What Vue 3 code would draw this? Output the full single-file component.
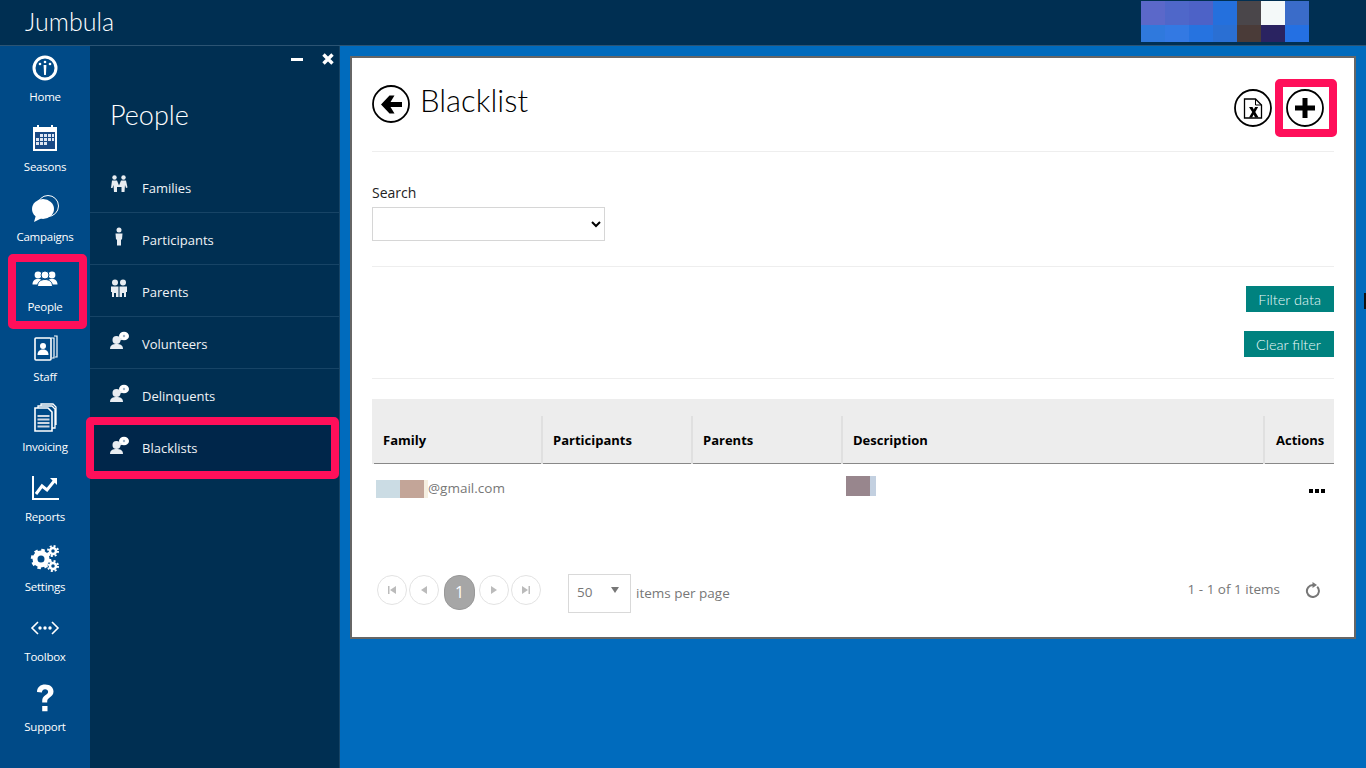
<script setup>
const bubble = '<circle cx="6.500" cy="9" r="4"/><path d="M0 18c0-4 3-5 6.500-5s6.500 1 6.500 5z"/><ellipse cx="14" cy="5" rx="5" ry="4.300" fill="#fff"/><path d="M10 8l1-1 2 1.500-3 1z"/><circle cx="14" cy="5" r="1.200" fill="#9fb4c6"/>'

const rail = [
  { label: 'Home', icon: '<circle cx="16" cy="16" r="11" fill="none" stroke="#fff" stroke-width="3"/><circle cx="11" cy="12" r="1.300"/><circle cx="16" cy="10" r="1.300"/><circle cx="21" cy="12" r="1.300"/><path d="M14.600 13h2.800l-.5 10h-1.800z"/>' },
  { label: 'Seasons', icon: '<path d="M4 5h4V3h2v2h12V3h2v2h4v24H4z"/><rect x="6" y="10" width="20" height="17" fill="#1a4a85"/><path fill="#dfe6f2" d="M11 12h3v3h-3zM15 12h3v3h-3zM19 12h3v3h-3zM23 12h2v3h-2zM7 16h3v3H7zM11 16h3v3h-3zM15 16h3v3h-3zM19 16h3v3h-3zM23 16h2v3h-2zM7 20h3v3H7zM11 20h3v3h-3zM15 20h3v3h-3z"/>' },
  { label: 'Campaigns', icon: '<circle cx="19" cy="14" r="10.500" fill="none" stroke="#fff" stroke-width="1"/><ellipse cx="14" cy="17" rx="11" ry="10"/><path d="M7 23l-2 7 8-4z"/>' },
  { label: 'People', icon: '<circle cx="9" cy="13" r="3.400"/><circle cx="23" cy="13" r="3.400"/><path d="M3.500 22.500c0-3.500 2-5.500 5.500-5.500s5.500 2 5.500 5.500zM17.500 22.500c0-3.500 2-5.500 5.500-5.500s5.500 2 5.500 5.500z"/><circle cx="16" cy="13" r="4" stroke="#004a87"/><path d="M8.500 24.500c0-4.500 3-7 7.500-7s7.500 2.500 7.500 7z" stroke="#004a87"/>' },
  { label: 'Staff', icon: '<g fill="none" stroke="#fff" stroke-width="1.200"><path d="M22 6h3v20h-2M25 4h3v21h-2"/><rect x="6" y="6" width="16" height="22" rx="1" stroke-width="1.600"/></g><circle cx="14" cy="14" r="3"/><path d="M8.500 23c0-4 2.500-5.500 5.500-5.500s5.500 1.500 5.500 5.500z"/>' },
  { label: 'Invoicing', icon: '<g fill="none" stroke="#fff" stroke-width="1.300"><path d="M9 6V4h14l3 3v19h-3M12 4V2h12l3 3v18"/><path d="M6 6h13l4 4v19H6z" stroke-width="1.600"/></g><path fill="#cfd8e3" d="M8.500 13h12v2h-12zM8.500 16.500h12v2h-12zM8.500 20h12v2h-12zM8.500 23.500h12v2h-12z"/>' },
  { label: 'Reports', icon: '<path d="M3 4h2v22h25v2H3z"/><path d="M7 22l6-8 5 4 8-10" fill="none" stroke="#fff" stroke-width="3"/><path d="M21 6h7v7z"/>' },
  { label: 'Settings', icon: '<g fill="none" stroke="#fff"><circle cx="12" cy="17" r="6" stroke-width="5"/><circle cx="12" cy="17" r="9" stroke-width="2.500" stroke-dasharray="3.500 3.570"/><circle cx="24" cy="9" r="3" stroke-width="2.500"/><circle cx="24" cy="9" r="5" stroke-width="2" stroke-dasharray="2 1.930"/><circle cx="24" cy="24" r="3" stroke-width="2.500"/><circle cx="24" cy="24" r="5" stroke-width="2" stroke-dasharray="2 1.930"/></g>' },
  { label: 'Toolbox', icon: '<path d="M9 10l-6 6 6 6M23 10l6 6-6 6" fill="none" stroke="#fff" stroke-width="1.600"/><circle cx="11" cy="16" r="1.700"/><circle cx="16" cy="16" r="1.700"/><circle cx="21" cy="16" r="1.700"/>' },
  { label: 'Support', icon: '<path d="M8 10c0-5 3.500-7.500 8.200-7.500 5 0 8.300 2.800 8.300 7 0 3-1.600 4.500-3.800 6-1.800 1.300-2.500 2-2.500 4v1h-5v-1.500c0-3 1.100-4.500 3.400-6 1.700-1.200 2.500-1.900 2.500-3.300 0-1.500-1.200-2.500-3-2.500-2 0-3.200 1.300-3.200 3.300zM13.200 24h5.300v5.300h-5.300z"/>' }
]

const menu = [
  { label: 'Families', icon: '<circle cx="4.500" cy="2.500" r="2.200"/><circle cx="13.500" cy="2.500" r="2.200"/><path d="M2 5.500h5l2 5 2-5h5l1.500 7-1.500.5-1-3-.5 7h-3v-5H7v5H4l-.5-7-1 3L1 13z"/>' },
  { label: 'Participants', icon: '<circle cx="9" cy="3" r="2.500"/><path d="M5.500 6.500h7l-.5 6h-1v6H7v-6H6z"/>' },
  { label: 'Parents', icon: '<circle cx="5" cy="3.500" r="3"/><circle cx="13" cy="3.500" r="3"/><path d="M1 7.500h7.500V18H6v-4H4v4H2v-5H1zM9.500 7.500H17V13h-1v5h-2v-4h-2v4H9.500z"/>' },
  { label: 'Volunteers', icon: bubble },
  { label: 'Delinquents', icon: bubble },
  { label: 'Blacklists', icon: bubble, active: true }
]

const blurTop = ['#5b68c9', '#4f67c9', '#4d62c7', '#2470dd', '#4a464a', '#f4f9f9', '#3a6cc9']
const blurBottom = ['#2f79dd', '#3379e3', '#2673e0', '#2a6fd3', '#4a3b38', '#2a2361', '#2470e3']

const columns = ['Family', 'Participants', 'Parents', 'Description', 'Actions']
</script>

<template>
  <div class="app">
    <header class="topbar">
      <span class="brand">Jumbula</span>
      <div class="avatar">
        <span v-for="(c, i) in blurTop" :key="'t' + i" :style="{ background: c }"></span>
        <span v-for="(c, i) in blurBottom" :key="'b' + i" :style="{ background: c }"></span>
      </div>
    </header>

    <div class="body">
      <nav class="rail">
        <a v-for="item in rail" :key="item.label" class="rail-item" :class="{ marked: item.label === 'People' }">
          <svg viewBox="0 0 32 32" width="32" height="32" fill="#fff" v-html="item.icon"></svg>
          <span>{{ item.label }}</span>
        </a>
      </nav>

      <aside class="panel">
        <div class="panel-tools">
          <span class="minus"></span>
          <svg viewBox="0 0 12 12" width="12" height="12"><path d="M1.500 1.500l9 9M10.500 1.500l-9 9" stroke="#fff" stroke-width="3.400"/></svg>
        </div>
        <h2>People</h2>
        <ul>
          <li v-for="m in menu" :key="m.label" :class="{ active: m.active }">
            <svg viewBox="0 0 20 20" width="20" height="20" fill="#e8edf2" v-html="m.icon"></svg>
            <span>{{ m.label }}</span>
          </li>
        </ul>
      </aside>

      <main class="main">
        <section class="card">
          <div class="page-head">
            <div class="title">
              <svg viewBox="0 0 38 38" width="38" height="38">
                <circle cx="19" cy="19" r="18" fill="none" stroke="#000" stroke-width="1.800"/>
                <path d="M30 17H18.500l4-6.500h-5L9 19.500l8.500 9h5l-4-6.500H30z"/>
              </svg>
              <h1>Blacklist</h1>
            </div>
            <div class="head-actions">
              <svg viewBox="0 0 38 38" width="38" height="38">
                <circle cx="19" cy="19" r="18" fill="#fff" stroke="#000" stroke-width="1.800"/>
                <path d="M10.500 10h11l6 6v13h-17z" fill="none" stroke="#000" stroke-width="1.300"/>
                <path d="M21.500 10v6h6" fill="none" stroke="#000" stroke-width="1"/>
                <path d="M15 18h3.500l1.300 2.500 1.300-2.500h3L21.300 23l3.300 5.500h-3.500l-1.500-3-1.500 3h-3.100l3.200-5.500z"/>
              </svg>
              <div class="plus-wrap">
                <svg viewBox="0 0 38 38" width="38" height="38">
                  <circle cx="19" cy="19" r="18" fill="#fff" stroke="#000" stroke-width="1.800"/>
                  <path d="M16.500 9h5v7.500H29v5h-7.500V29h-5v-7.500H9v-5h7.500z"/>
                </svg>
              </div>
            </div>
          </div>

          <div class="search">
            <label for="search">Search</label>
            <select id="search"><option></option></select>
          </div>

          <div class="filters">
            <button>Filter data</button>
            <button>Clear filter</button>
          </div>

          <div class="grid">
            <div class="grid-top"></div>
            <table>
              <thead>
                <tr>
                  <th v-for="c in columns" :key="c">{{ c }}</th>
                </tr>
              </thead>
              <tbody>
                <tr>
                  <td class="cell-email">
                    <i class="blk" style="background:#cbdce4"></i><i class="blk" style="background:#c3a598"></i><i class="blk-thin"></i>@gmail.com
                  </td>
                  <td></td>
                  <td></td>
                  <td class="cell-desc">
                    <i class="blk" style="background:#98868d"></i><i class="blk-end"></i>
                  </td>
                  <td class="cell-dots"><b></b><b></b><b></b></td>
                </tr>
              </tbody>
            </table>
          </div>

          <div class="pager">
            <div class="pages">
              <span class="pg">
                <svg viewBox="0 0 10 10" width="10" height="10"><path d="M1 1h1.500v8H1zM9 1v8L3 5z"/></svg>
              </span>
              <span class="pg">
                <svg viewBox="0 0 10 10" width="10" height="10"><path d="M8 1v8L2 5z"/></svg>
              </span>
              <span class="pg current">1</span>
              <span class="pg">
                <svg viewBox="0 0 10 10" width="10" height="10"><path d="M2 1v8l6-4z"/></svg>
              </span>
              <span class="pg">
                <svg viewBox="0 0 10 10" width="10" height="10"><path d="M1 1v8l6-4zM7.500 1H9v8H7.500z"/></svg>
              </span>
            </div>
            <div class="per-page">
              <span class="num">50</span>
              <span class="caret"></span>
            </div>
            <span class="per-label">items per page</span>
            <span class="count">1 - 1 of 1 items</span>
            <svg class="refresh" viewBox="0 0 16 16" width="16" height="16">
              <path d="M8 3A6 6 0 1 0 12.200 4.800" fill="none" stroke="#777" stroke-width="2"/>
              <path d="M7.500 0L12 3 7.500 6z" fill="#777"/>
            </svg>
          </div>
        </section>
      </main>
    </div>
    <span class="cursor-edge"></span>
  </div>
</template>

<style scoped>
.app {
  position: relative;
  width: 1366px;
  height: 768px;
  overflow: hidden;
  display: flex;
  flex-direction: column;
  font-family: "Open Sans", "Liberation Sans", sans-serif;
  background: #006bbd;
}
.topbar {
  height: 45px;
  flex: none;
  background: #002f52;
  border-bottom: 1px solid #2c5473;
  display: flex;
  justify-content: space-between;
  align-items: flex-start;
}
.brand {
  margin: 7px 0 0 25px;
  color: #fff;
  font-family: Lato, sans-serif;
  font-size: 25px;
  font-weight: 300;
  line-height: 28px;
}
.avatar {
  margin: 1px 57px 0 0;
  display: grid;
  grid-template-columns: repeat(7, 24px);
  grid-template-rows: 24px 17px;
}
.body {
  flex: 1;
  display: flex;
  min-height: 0;
}
.rail {
  width: 90px;
  flex: none;
  background: #004a87;
}
.rail-item {
  position: relative;
  height: 70px;
  display: flex;
  flex-direction: column;
  align-items: center;
  padding-top: 6px;
  box-sizing: border-box;
  color: #fff;
  font-size: 11.500px;
  letter-spacing: -0.25px;
  line-height: 16px;
}
.rail-item span {
  margin-top: 5px;
}
.rail-item.marked::after {
  content: "";
  position: absolute;
  left: 8px;
  top: -2px;
  width: 79px;
  height: 75px;
  box-sizing: border-box;
  border: 8px solid #ff0f5a;
  border-radius: 5px;
}
.panel {
  position: relative;
  width: 250px;
  flex: none;
  background: #002f52;
  border-right: 1px solid #174466;
  box-sizing: border-box;
}
.panel-tools {
  display: flex;
  justify-content: flex-end;
  align-items: center;
  gap: 19px;
  height: 14px;
  padding: 6px 5px 0 0;
}
.minus {
  width: 12px;
  height: 3px;
  background: #fff;
}
.panel h2 {
  margin: 33px 0 0 20px;
  color: #fff;
  font-family: Lato, sans-serif;
  font-size: 27px;
  font-weight: 300;
  line-height: 32px;
}
.panel ul {
  list-style: none;
  margin: 30px 0 0;
  padding: 0;
}
.panel li {
  position: relative;
  height: 52px;
  box-sizing: border-box;
  display: flex;
  align-items: center;
  padding: 2px 0 0 20px;
  border-bottom: 1px solid #174466;
  color: #f0f3f6;
  font-size: 13px;
}
.panel li svg {
  margin: -5px 12px 0 0;
}
.panel li:nth-last-child(2) {
  border-bottom: none;
}
.panel li.active {
  border-bottom: none;
  background: #00264a;
}
.panel li.active::after {
  content: "";
  position: absolute;
  left: -4px;
  right: 0;
  top: -4px;
  bottom: -6px;
  border: 8px solid #ff0f5a;
  border-radius: 5px;
}
.main {
  flex: 1;
  padding: 10px 10px 0;
  min-width: 0;
}
.card {
  height: 583px;
  box-sizing: border-box;
  background: #fff;
  border: 2px solid #666;
  padding: 0 20px;
}
.page-head {
  height: 94px;
  box-sizing: border-box;
  padding-top: 27px;
  border-bottom: 1px solid #eee;
  display: flex;
  justify-content: space-between;
  align-items: flex-start;
}
.title {
  display: flex;
  align-items: flex-start;
  gap: 10px;
}
.title h1 {
  margin: -2px 0 0;
  font-family: Lato, sans-serif;
  font-size: 31px;
  font-weight: 300;
  line-height: 34px;
  color: #000;
}
.head-actions {
  display: flex;
  gap: 14px;
  padding: 4px 10px 0 0;
}
.plus-wrap {
  position: relative;
  width: 38px;
  height: 38px;
}
.plus-wrap::after {
  content: "";
  position: absolute;
  left: -11px;
  top: -10px;
  width: 62px;
  height: 58px;
  box-sizing: border-box;
  border: 8px solid #ff0f5a;
  border-radius: 5px;
}
.search {
  height: 115px;
  box-sizing: border-box;
  padding-top: 31px;
  border-bottom: 1px solid #eee;
}
.search label {
  display: block;
  font-size: 14px;
  line-height: 20px;
  color: #222;
}
.search select {
  display: block;
  width: 233px;
  height: 34px;
  margin-top: 4px;
  padding-right: 2px;
  background: #fff;
  border: 1px solid #d6d6d6;
  border-radius: 0;
}
.filters {
  height: 112px;
  box-sizing: border-box;
  padding-top: 19px;
  border-bottom: 1px solid #eee;
  display: flex;
  flex-direction: column;
  align-items: flex-end;
  gap: 19px;
}
.filters button {
  height: 26px;
  padding: 0 13px 0 12px;
  border: none;
  background: #00827f;
  color: #eafafa;
  font-family: Lato, sans-serif;
  font-size: 14.500px;
  font-weight: 300;
}
.grid {
  margin-top: 20px;
}
.grid-top {
  height: 17px;
  background: #ededed;
}
table {
  width: 100%;
  table-layout: fixed;
  border-collapse: collapse;
}
th {
  height: 47px;
  padding: 2px 0 0 10px;
  box-sizing: border-box;
  background: #ededed;
  border-left: 2px solid #e0e0e0;
  border-bottom: 1px solid #888;
  text-align: left;
  font-size: 13px;
  font-weight: 700;
  color: #000;
}
th:nth-child(1) { width: 169px; padding-left: 9px; border-left-color: #ededed; }
th:nth-child(2), th:nth-child(3) { width: 150px; }
th:nth-child(5) { width: 70px; padding-left: 11px; }
td {
  height: 49px;
  padding: 0;
  font-size: 13.500px;
  color: #777;
}
.blk {
  display: inline-block;
  width: 24px;
  height: 18px;
  vertical-align: -5px;
}
.blk-thin {
  display: inline-block;
  width: 4px;
  height: 18px;
  background: #f5eee0;
  vertical-align: -5px;
}
.blk-end {
  display: inline-block;
  width: 6px;
  height: 20px;
  background: #c3d0e0;
}
.cell-email {
  padding-left: 3px;
}
.cell-desc {
  padding-left: 4px;
}
.cell-desc .blk {
  height: 20px;
  vertical-align: top;
}
.cell-dots {
  text-align: right;
  padding-right: 9px;
  white-space: nowrap;
}
.cell-dots b {
  display: inline-block;
  width: 4px;
  height: 4px;
  margin-left: 2px;
  background: #000;
}
.pager {
  margin-top: 61px;
  display: flex;
  align-items: flex-start;
  color: #777;
  font-size: 13.500px;
}
.pages {
  display: flex;
  align-items: flex-start;
  gap: 2px;
  margin: 1px 0 0 5px;
}
.pg {
  width: 28px;
  height: 28px;
  border: 1px solid #e3e3e3;
  border-radius: 50%;
  display: flex;
  align-items: center;
  justify-content: center;
}
.pg svg {
  fill: #bbb;
}
.pg.current {
  width: 29px;
  height: 33px;
  margin: 0 2px 0 3px;
  border-color: #999;
  border-radius: 15px;
  background: #a6a6a6;
  color: #fff;
  font-size: 16px;
}
.per-page {
  position: relative;
  width: 63px;
  height: 39px;
  margin-left: 27px;
  box-sizing: border-box;
  border: 1px solid #d9d9d9;
  padding: 7px 0 0 8px;
  line-height: 20px;
}
.caret {
  position: absolute;
  right: 11px;
  top: 12px;
  border-left: 4px solid transparent;
  border-right: 4px solid transparent;
  border-top: 6px solid #777;
}
.per-label {
  margin: 9px 0 0 5px;
  line-height: 20px;
}
.count {
  margin: 5px 0 0 auto;
  line-height: 20px;
}
.refresh {
  margin: 8px 13px 0 25px;
}
.cursor-edge {
  position: absolute;
  left: 1364px;
  top: 293px;
  width: 2px;
  height: 16px;
  background: #111;
}
</style>
